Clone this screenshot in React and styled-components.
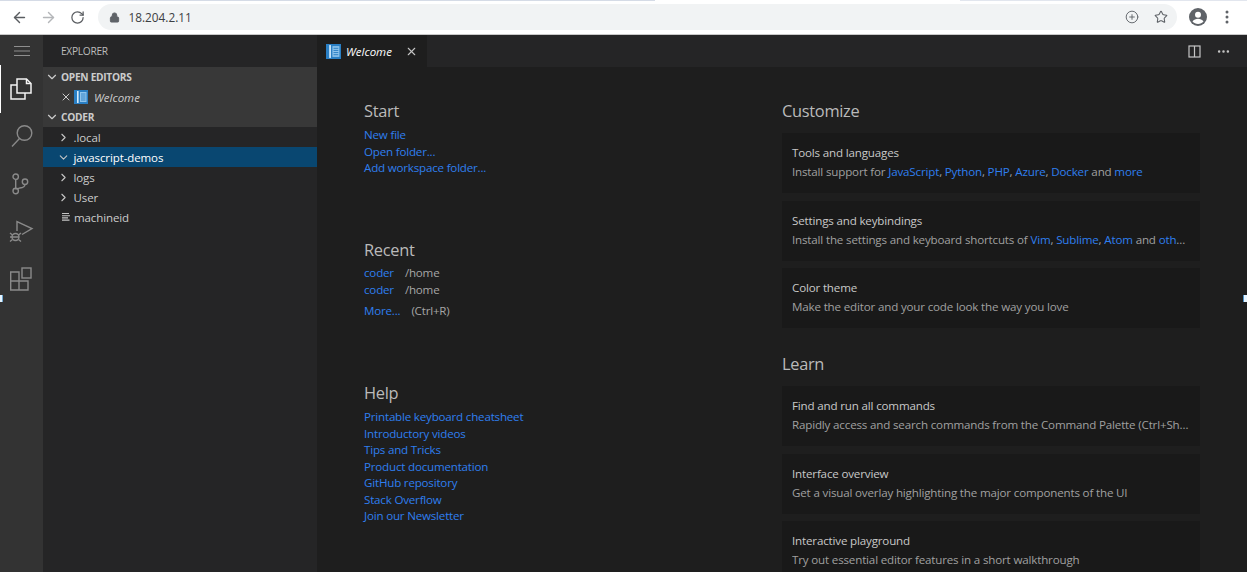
import React from "react";
import styled, { createGlobalStyle } from "styled-components";
import { ArrowLeft, ArrowRight, RotateCw, Lock, CirclePlus, Star, ChevronDown, ChevronRight, X, MoreHorizontal } from "lucide-react";

const GlobalStyle = createGlobalStyle`
  html, body {
    margin: 0;
    padding: 0;
    height: 572px;
    overflow: hidden;
    background: #1e1e1e;
    font-family: "Open Sans", "Liberation Sans", sans-serif;
  }
  * { box-sizing: border-box; }
`;

const Page = styled.div`
  position: relative;
  width: 1247px;
  height: 572px;
  display: flex;
  flex-direction: column;
  overflow: hidden;
`;

const TopStrip = styled.div`
  flex: none;
  height: 1px;
  background: linear-gradient(to right, #d5dbe6 655px, #fff 655px, #fff 960px, #e2e6ee 960px);
`;

const Browser = styled.header`
  flex: none;
  height: 34px;
  display: flex;
  align-items: center;
  padding: 0 18px 1px 4.5px;
  background: #fff;
  border-bottom: 1px solid #c9c9c9;
  color: #5f6368;
`;

const NavIcon = styled.span`
  display: flex;
  width: 29px;
  justify-content: center;
  color: ${(p) => (p.$off ? "#b4b6b9" : "#5a5d61")};
`;

const Omnibox = styled.div`
  flex: 1;
  height: 26px;
  margin: 0 12px 0 6px;
  padding: 0 9px 0 11px;
  display: flex;
  align-items: center;
  background: #f1f3f4;
  border-radius: 13px;
`;

const Address = styled.span`
  margin-left: 9px;
  flex: 1;
  font-size: 11.8px;
  color: #3c4043;
`;

const OmniIcon = styled.span`
  display: flex;
  margin-left: 15px;
`;

const Avatar = styled.svg`
  display: block;
  margin-right: 18px;
`;

const Workbench = styled.div`
  flex: 1;
  min-height: 0;
  display: flex;
`;

const ActivityBar = styled.nav`
  flex: none;
  width: 43px;
  background: #333333;
  display: flex;
  flex-direction: column;
  align-items: center;
`;

const MenuBtn = styled.div`
  height: 30px;
  padding-top: 2px;
  display: flex;
  align-items: center;
  color: #8e8e8e;
`;

const ActivityItem = styled.div`
  width: 43px;
  height: 47.5px;
  display: flex;
  align-items: center;
  justify-content: center;
  border-left: 1px solid ${(p) => (p.$active ? "#fff" : "transparent")};
  color: ${(p) => (p.$active ? "#f4f4f4" : "#8a8a8a")};
`;

const Sidebar = styled.aside`
  flex: none;
  width: 274px;
  background: #252526;
  color: #cccccc;
  font-size: 11.5px;
`;

const SideTitle = styled.div`
  height: 32px;
  padding-left: 18px;
  display: flex;
  align-items: center;
  font-size: 10.2px;
  letter-spacing: -0.3px;
  color: #bbbbbb;
`;

const SectionHead = styled.div`
  height: 20px;
  display: flex;
  align-items: center;
  gap: 2px;
  padding-left: 2px;
  background: #383838;
  font-size: 10.2px;
  font-weight: 700;
  letter-spacing: -0.3px;
  color: #cccccc;
`;

const Row = styled.div`
  height: 20px;
  display: flex;
  align-items: center;
  padding-left: ${(p) => p.$indent || 0}px;
  letter-spacing: -0.1px;
  background: ${(p) => (p.$selected ? "#094771" : "transparent")};
  color: ${(p) => (p.$selected ? "#fff" : "#cccccc")};
`;

const OpenEditorRow = styled(Row)`
  background: #383838;
  font-style: italic;
  letter-spacing: 0;
`;

const RowIcon = styled.span`
  display: flex;
  width: 13px;
  margin-right: ${(p) => p.$gap || 3.5}px;
  justify-content: center;
  color: #c5c5c5;
`;

const OpenEditorName = styled.span`
  margin-left: 6px;
`;

const Editor = styled.main`
  flex: 1;
  min-width: 0;
  display: flex;
  flex-direction: column;
  background: #1e1e1e;
`;

const TabBar = styled.div`
  flex: none;
  height: 32px;
  display: flex;
  align-items: stretch;
  justify-content: space-between;
  background: #252526;
`;

const Tab = styled.div`
  width: 110px;
  padding-left: 9px;
  display: flex;
  align-items: center;
  background: #1e1e1e;
  color: #fff;
  font-size: 11.5px;
  font-style: italic;
`;

const TabName = styled.span`
  margin: 0 6px 0 5px;
  flex: 1;
`;

const TabActions = styled.div`
  display: flex;
  align-items: center;
  gap: 15px;
  padding-right: 16px;
  color: #c5c5c5;
`;

const Welcome = styled.div`
  flex: 1;
  min-height: 0;
  overflow: hidden;
  display: grid;
  grid-template-columns: 418px 418px;
  padding: 33px 0 0 47px;
  font-size: 11.6px;
  line-height: 16.5px;
  letter-spacing: -0.2px;
  color: #a0a0a0;
`;

const Column = styled.div`
  display: flex;
  flex-direction: column;
`;

const Heading = styled.h2`
  margin: ${(p) => p.$top || 0}px 0 ${(p) => p.$bottom || 5}px;
  font-size: 16.4px;
  line-height: 22px;
  font-weight: 400;
  letter-spacing: -0.3px;
  color: #bababa;
`;

const Link = styled.a`
  color: #2f7fef;
  text-decoration: none;
`;

const LinkLine = styled.div`
  white-space: nowrap;
  margin-top: ${(p) => p.$top || 0}px;
`;

const Path = styled.span`
  margin-left: ${(p) => p.$gap || 11}px;
  color: #a6a6a6;
`;

const Card = styled.div`
  flex: none;
  height: 60px;
  margin-bottom: 7.6px;
  padding: 12px 10px 0;
  background: #191919;
  letter-spacing: -0.17px;
`;

const CardTitle = styled.div`
  margin-bottom: 2.5px;
  color: #c8c8c8;
  white-space: nowrap;
`;

const CardText = styled.div`
  white-space: nowrap;
  overflow: hidden;
  text-overflow: ellipsis;
`;

const Marker = styled.span`
  position: absolute;
  top: 295px;
  ${(p) => (p.$right ? "right: 0; width: 4px; border-left: 1px solid #4a8fc4;" : "left: 0; width: 3px; border-right: 1px solid #6fa8d2;")}
  height: 7px;
  background: #e6f4ff;
`;

const WelcomeIcon = ({ size = 14 }) => (
  <svg width={size} height={size} viewBox="0 0 14 14" style={{ flex: "none" }}>
    <rect width="14" height="14" fill="#2a7fc4" />
    <rect x="3" y="1" width="1.6" height="12" fill="#d6ebfa" />
    <rect x="6" y="2" width="6.5" height="10" fill="#8fc4ec" />
    <path d="M7 4h4.5M7 6h4.5M7 8h4.5M7 10h4.5" stroke="#2a7fc4" strokeWidth="0.9" />
  </svg>
);

const FilesIcon = () => (
  <svg width="24" height="24" viewBox="0 0 24 24" fill="none" stroke="currentColor" strokeWidth="1.5">
    <path d="M7 2h9.500l4.500 4.500V16H7z" />
    <path d="M16.500 2v4.500H21" />
    <path d="M7 8H1v14h14v-6" />
  </svg>
);

const SearchIcon = () => (
  <svg width="24" height="24" viewBox="0 0 24 24" fill="none" stroke="currentColor" strokeWidth="1.4">
    <circle cx="14.500" cy="9" r="7.300" />
    <path d="M9.500 14.500L2 22.500" />
  </svg>
);

const GitIcon = () => (
  <svg width="24" height="24" viewBox="0 0 24 24" fill="none" stroke="currentColor" strokeWidth="1.4">
    <circle cx="5.700" cy="4.700" r="2.700" />
    <circle cx="5.700" cy="19" r="2.700" />
    <circle cx="15" cy="9.700" r="2.700" />
    <path d="M5.700 7.400v9M15 12.400c0 3-3.500 3.400-5.500 3.700-2 .3-3.800.8-3.800 1.500" />
  </svg>
);

const DebugIcon = () => (
  <svg width="26" height="26" viewBox="0 0 26 26" fill="none" stroke="currentColor" strokeWidth="1.4">
    <path d="M8 13V3.500L23 10.500 13 16.500" />
    <circle cx="6.500" cy="19" r="3.500" />
    <path d="M1 15l2.500 2M1 19h2M1 23.500l2.500-2M12 15l-2.500 2M12 23.500l-2.500-2M3 19h7" />
  </svg>
);

const ExtensionsIcon = () => (
  <svg width="24" height="24" viewBox="0 0 24 24" fill="none" stroke="currentColor" strokeWidth="1.4">
    <path d="M0.700 5h8.300v18H0.700zM0.700 14H18v9H9" />
    <rect x="12" y="1" width="9" height="10" />
  </svg>
);

const FileLinesIcon = () => (
  <svg width="10" height="10" viewBox="0 0 10 10" stroke="currentColor" strokeWidth="1.1">
    <path d="M1 1.500h7M1 3.700h8M1 5.900h6M1 8.100h7.500" />
  </svg>
);

const SplitIcon = () => (
  <svg width="13" height="13" viewBox="0 0 13 13" fill="none" stroke="currentColor" strokeWidth="1.2">
    <rect x="1" y="1" width="11" height="11" />
    <path d="M6.500 1v11" />
  </svg>
);

const HamburgerIcon = () => (
  <svg width="16" height="12" viewBox="0 0 16 12" stroke="currentColor" strokeWidth="1">
    <path d="M0 1.500h16M0 6h16M0 10.500h16" />
  </svg>
);

const files = [
  { name: ".local" },
  { name: "javascript-demos", open: true, selected: true },
  { name: "logs" },
  { name: "User" },
];

const startLinks = ["New file", "Open folder...", "Add workspace folder..."];
const helpLinks = [
  "Printable keyboard cheatsheet",
  "Introductory videos",
  "Tips and Tricks",
  "Product documentation",
  "GitHub repository",
  "Stack Overflow",
  "Join our Newsletter",
];

export default function App() {
  return (
    <Page>
      <GlobalStyle />
      <TopStrip />
      <Browser>
        <NavIcon><ArrowLeft size={17} strokeWidth={2} /></NavIcon>
        <NavIcon $off><ArrowRight size={17} strokeWidth={2} /></NavIcon>
        <NavIcon><RotateCw size={15} strokeWidth={2} /></NavIcon>
        <Omnibox>
          <Lock size={11} fill="#5f6368" color="#5f6368" />
          <Address>18.204.2.11</Address>
          <OmniIcon><CirclePlus size={14} strokeWidth={1.6} /></OmniIcon>
          <OmniIcon><Star size={14} strokeWidth={1.8} /></OmniIcon>
        </Omnibox>
        <Avatar width="18" height="18" viewBox="0 0 18 18">
          <circle cx="9" cy="9" r="9" fill="#5f6368" />
          <circle cx="9" cy="6.800" r="3" fill="#fff" />
          <path d="M3.500 13.500c1.200-2 3.400-2.800 5.500-2.800s4.300.8 5.500 2.800c-1.300 1.600-3.300 2.500-5.500 2.500s-4.200-.9-5.500-2.500z" fill="#fff" />
        </Avatar>
        <svg width="4" height="14" viewBox="0 0 4 14" fill="#5f6368">
          <circle cx="2" cy="2" r="1.500" />
          <circle cx="2" cy="7" r="1.500" />
          <circle cx="2" cy="12" r="1.500" />
        </svg>
      </Browser>
      <Workbench>
        <ActivityBar>
          <MenuBtn><HamburgerIcon /></MenuBtn>
          <ActivityItem $active><FilesIcon /></ActivityItem>
          <ActivityItem><SearchIcon /></ActivityItem>
          <ActivityItem><GitIcon /></ActivityItem>
          <ActivityItem><DebugIcon /></ActivityItem>
          <ActivityItem><ExtensionsIcon /></ActivityItem>
        </ActivityBar>
        <Sidebar>
          <SideTitle>EXPLORER</SideTitle>
          <SectionHead><ChevronDown size={14} />OPEN EDITORS</SectionHead>
          <OpenEditorRow $indent={17}>
            <X size={12} style={{ marginRight: 2 }} />
            <WelcomeIcon />
            <OpenEditorName>Welcome</OpenEditorName>
          </OpenEditorRow>
          <SectionHead><ChevronDown size={14} />CODER</SectionHead>
          {files.map((f) => (
            <Row key={f.name} $selected={f.selected} $indent={14}>
              <RowIcon>{f.open ? <ChevronDown size={13} /> : <ChevronRight size={13} />}</RowIcon>
              {f.name}
            </Row>
          ))}
          <Row $indent={16}>
            <RowIcon $gap={2}><FileLinesIcon /></RowIcon>
            machineid
          </Row>
        </Sidebar>
        <Editor>
          <TabBar>
            <Tab>
              <WelcomeIcon size={15} />
              <TabName>Welcome</TabName>
              <X size={13} color="#c5c5c5" style={{ marginRight: 9 }} />
            </Tab>
            <TabActions>
              <SplitIcon />
              <MoreHorizontal size={15} />
            </TabActions>
          </TabBar>
          <Welcome>
            <Column>
              <Heading>Start</Heading>
              {startLinks.map((l) => <LinkLine key={l}><Link>{l}</Link></LinkLine>)}
              <Heading $top={62} $bottom={4.5}>Recent</Heading>
              <LinkLine><Link>coder</Link><Path>/home</Path></LinkLine>
              <LinkLine><Link>coder</Link><Path>/home</Path></LinkLine>
              <LinkLine $top={4.5}><Link>More...</Link><Path>(Ctrl+R)</Path></LinkLine>
              <Heading $top={63}>Help</Heading>
              {helpLinks.map((l) => <LinkLine key={l}><Link>{l}</Link></LinkLine>)}
            </Column>
            <Column>
              <Heading $bottom={11}>Customize</Heading>
              <Card>
                <CardTitle>Tools and languages</CardTitle>
                <CardText>Install support for <Link>JavaScript</Link>, <Link>Python</Link>, <Link>PHP</Link>, <Link>Azure</Link>, <Link>Docker</Link> and <Link>more</Link></CardText>
              </Card>
              <Card>
                <CardTitle>Settings and keybindings</CardTitle>
                <CardText>Install the settings and keyboard shortcuts of <Link>Vim</Link>, <Link>Sublime</Link>, <Link>Atom</Link> and <Link>others</Link></CardText>
              </Card>
              <Card>
                <CardTitle>Color theme</CardTitle>
                <CardText>Make the editor and your code look the way you love</CardText>
              </Card>
              <Heading $top={17.5} $bottom={11}>Learn</Heading>
              <Card>
                <CardTitle>Find and run all commands</CardTitle>
                <CardText>Rapidly access and search commands from the Command Palette (Ctrl+Shift+P)</CardText>
              </Card>
              <Card>
                <CardTitle>Interface overview</CardTitle>
                <CardText>Get a visual overlay highlighting the major components of the UI</CardText>
              </Card>
              <Card>
                <CardTitle>Interactive playground</CardTitle>
                <CardText>Try out essential editor features in a short walkthrough</CardText>
              </Card>
            </Column>
          </Welcome>
        </Editor>
      </Workbench>
      <Marker />
      <Marker $right />
    </Page>
  );
}
